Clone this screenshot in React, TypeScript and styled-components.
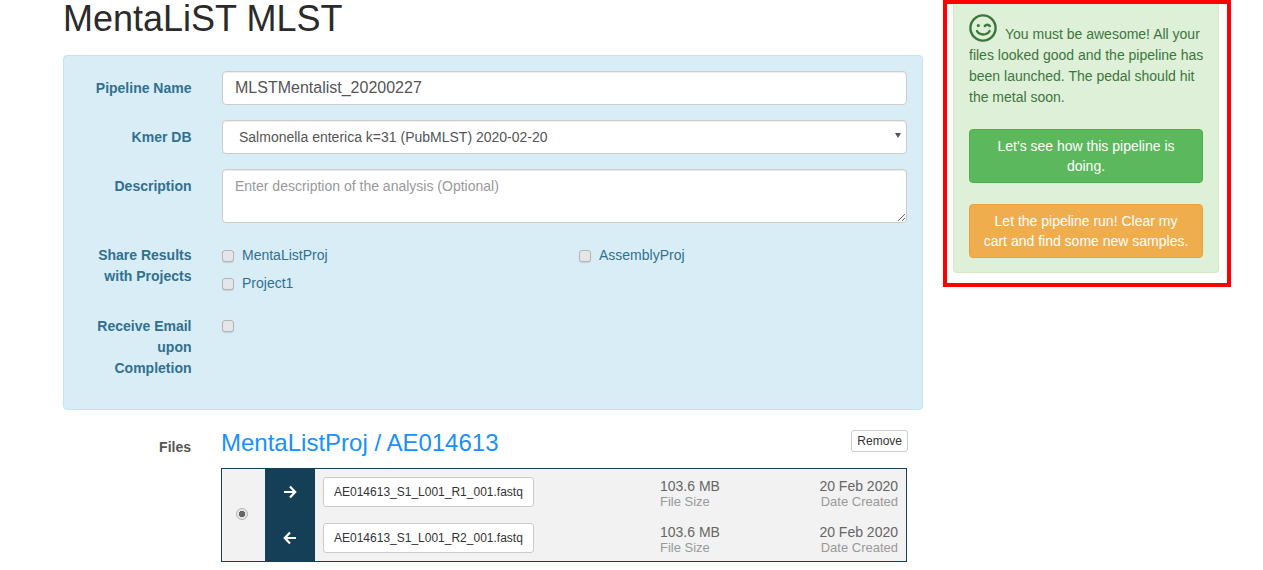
import styled, { createGlobalStyle } from "styled-components";

const GlobalStyle = createGlobalStyle`
  html, body {
    margin: 0;
    padding: 0;
    background: #fff;
    height: 570px;
    overflow: hidden;
  }
  * { box-sizing: border-box; }
  body {
    font-family: "Liberation Sans", Arial, sans-serif;
    font-size: 14px;
    line-height: 1.43;
    color: #333;
  }
`;

const Page = styled.div`
  display: flex;
  align-items: flex-start;
  height: 570px;
  overflow: hidden;
  padding-left: 63px;
`;

const Main = styled.div`
  width: 860px;
  flex: none;
`;

const Title = styled.h1`
  margin: 0 0 17px;
  font-size: 36px;
  font-weight: 500;
  line-height: 38px;
  color: #2b2b2b;
`;

const FormPanel = styled.div`
  background: #d9edf7;
  border: 1px solid #bce8f1;
  border-radius: 4px;
  padding: 15px 15px 26px;
  height: 355px;
`;

const Row = styled.div<{ $bottom?: number }>`
  display: grid;
  grid-template-columns: 112.5px 1fr;
  column-gap: 30.5px;
  margin-bottom: ${(p) => p.$bottom ?? 15}px;
`;

const FieldLabel = styled.label`
  font-weight: 700;
  color: #31708f;
  text-align: right;
  padding-top: 7px;
  line-height: 21px;
`;

const TextInput = styled.input`
  width: 100%;
  height: 34px;
  padding: 6px 12px;
  font: 16px "Liberation Sans", Arial, sans-serif;
  color: #555;
  background: #fff;
  border: 1px solid #ccc;
  border-radius: 4px;
  box-shadow: inset 0 1px 1px rgba(0, 0, 0, 0.075);
`;

const SelectBox = styled.div`
  position: relative;
  height: 34px;
  padding: 6px 16px;
  font-size: 14px;
  line-height: 20px;
  color: #555;
  background: #fff;
  border: 1px solid #ccc;
  border-radius: 4px;
  box-shadow: inset 0 1px 1px rgba(0, 0, 0, 0.075);
`;

const Caret = styled.span`
  position: absolute;
  right: 5px;
  top: 12px;
  width: 0;
  height: 0;
  border-left: 3px solid transparent;
  border-right: 3px solid transparent;
  border-top: 5px solid #555;
`;

const TextArea = styled.textarea`
  display: block;
  width: 100%;
  height: 54px;
  padding: 6px 12px;
  font: 14px/20px "Liberation Sans", Arial, sans-serif;
  color: #555;
  background: #fff;
  border: 1px solid #ccc;
  border-radius: 4px;
  box-shadow: inset 0 1px 1px rgba(0, 0, 0, 0.075);
  &::placeholder { color: #999; opacity: 1; }
`;

const CheckGrid = styled.div`
  display: grid;
  grid-template-columns: 357px 1fr;
  row-gap: 7px;
  padding-top: 7px;
`;

const CheckLabel = styled.label`
  display: flex;
  align-items: center;
  gap: 8px;
  line-height: 21px;
  color: #31708f;
`;

const CheckBox = styled.input.attrs({ type: "checkbox" })`
  appearance: none;
  width: 12px;
  height: 12px;
  margin: 0;
  background: #e4e6e8;
  border: 1px solid #b5b5b5;
  border-radius: 3px;
  box-shadow: 0 1px 1px rgba(0, 0, 0, 0.12);
`;

const EmailCheck = styled.div`
  padding-top: 7px;
  height: 84px;
  display: flex;
  align-items: flex-start;
  & > input { margin-top: 4px; }
`;

const FilesSection = styled.div`
  display: grid;
  grid-template-columns: 128px 686px;
  column-gap: 30px;
  padding-top: 19px;
`;

const FilesLabel = styled.div`
  font-weight: 700;
  color: #555;
  text-align: right;
  padding-top: 8px;
`;

const FilesHeader = styled.div`
  display: flex;
  justify-content: space-between;
  align-items: flex-start;
  height: 39px;
`;

const ProjectLink = styled.a`
  font-size: 24px;
  line-height: 28px;
  color: #1890ff;
`;

const RemoveButton = styled.button`
  font: 12px/16px "Liberation Sans", Arial, sans-serif;
  color: #333;
  background: #fff;
  border: 1px solid #ccc;
  border-radius: 3px;
  padding: 2px 5px;
  height: 22px;
  margin: 1px -1px 0 0;
`;

const FileTable = styled.div`
  display: grid;
  grid-template-columns: 43px 50px 1fr;
  height: 94px;
  background: #f2f2f2;
  border: 1px solid #153e57;
`;

const RadioCell = styled.div`
  display: flex;
  align-items: center;
  justify-content: center;
  padding: 0 3px 3px 0;
`;

const Radio = styled.input.attrs({ type: "radio", defaultChecked: true })`
  appearance: none;
  width: 12px;
  height: 12px;
  margin: 0;
  border: 1px solid #b5b5b5;
  border-radius: 50%;
  background: radial-gradient(circle, #666 0 3px, #e4e6e8 3.5px);
`;

const ArrowColumn = styled.div`
  display: grid;
  grid-template-rows: 1fr 1fr;
  background: #153e57;
  color: #fff;
  align-items: center;
  justify-items: center;
`;

const FileRows = styled.div`
  display: grid;
  grid-template-rows: 46px 46px;
`;

const FileRow = styled.div`
  display: flex;
  align-items: center;
  padding: 0 8px;
`;

const FileName = styled.div`
  width: 211px;
  height: 30px;
  font-size: 12px;
  line-height: 28px;
  padding-left: 10px;
  color: #333;
  background: #fff;
  border: 1px solid #ccc;
  border-radius: 3px;
`;

const Meta = styled.div<{ $width: number; $right?: boolean }>`
  width: ${(p) => p.$width}px;
  margin-left: ${(p) => (p.$right ? 0 : 126)}px;
  padding-top: 5px;
  text-align: ${(p) => (p.$right ? "right" : "left")};
  font-size: 14px;
  line-height: 15px;
  color: #666;
  & > small {
    display: block;
    font-size: 13px;
    line-height: 16px;
    color: #999;
  }
`;

const Side = styled.div`
  flex: none;
  width: 288px;
  height: 287px;
  margin-left: 20px;
  border: 4px solid #f00;
  padding: 0 8px 0 6px;
`;

const Success = styled.div`
  height: 269px;
  background: #dff0d8;
  border: 1px solid #d6e9c6;
  border-top: 0;
  border-radius: 0 0 4px 4px;
  padding: 10px 15px 0;
  color: #3c763d;
  line-height: 21px;
`;

const Message = styled.p`
  margin: 0 -3px 21px 0;
  & > svg {
    vertical-align: -3px;
    margin-right: 8px;
  }
`;

const ActionButton = styled.a<{ $color: string; $border: string }>`
  display: block;
  padding: 6px 12px;
  margin-bottom: 21px;
  text-align: center;
  line-height: 20px;
  color: #fff;
  background: ${(p) => p.$color};
  border: 1px solid ${(p) => p.$border};
  border-radius: 4px;
`;

const WinkIcon = () => (
  <svg width="28" height="28" viewBox="0 0 28 28" fill="none" stroke="#3c763d" strokeWidth="2.4" strokeLinecap="round">
    <circle cx="14" cy="14" r="12.6" />
    <circle cx="9.3" cy="11.5" r="1.6" fill="#3c763d" stroke="none" />
    <path d="M15.8 12c1.2-1.7 3.8-1.7 5 0" />
    <path d="M8 17c2.2 4.6 10.2 4.6 12.6 0" />
  </svg>
);

const ArrowIcon = ({ flip }: { flip?: boolean }) => (
  <svg width="14" height="14" viewBox="0 0 14 14" fill="none" stroke="#fff" strokeWidth="2.2" style={flip ? { transform: "scaleX(-1)" } : undefined}>
    <path d="M1 7h11M7 1.5l5.2 5.5-5.2 5.5" />
  </svg>
);

const files = [
  { name: "AE014613_S1_L001_R1_001.fastq" },
  { name: "AE014613_S1_L001_R2_001.fastq" },
];

export default function App() {
  return (
    <Page>
      <GlobalStyle />
      <Main>
        <Title>MentaLiST MLST</Title>
        <FormPanel>
          <Row>
            <FieldLabel>Pipeline Name</FieldLabel>
            <TextInput defaultValue="MLSTMentalist_20200227" />
          </Row>
          <Row>
            <FieldLabel>Kmer DB</FieldLabel>
            <SelectBox>
              Salmonella enterica k=31 (PubMLST) 2020-02-20
              <Caret />
            </SelectBox>
          </Row>
          <Row>
            <FieldLabel>Description</FieldLabel>
            <TextArea placeholder="Enter description of the analysis (Optional)" />
          </Row>
          <Row>
            <FieldLabel>Share Results with Projects</FieldLabel>
            <CheckGrid>
              <CheckLabel><CheckBox />MentaListProj</CheckLabel>
              <CheckLabel><CheckBox />AssemblyProj</CheckLabel>
              <CheckLabel><CheckBox />Project1</CheckLabel>
            </CheckGrid>
          </Row>
          <Row $bottom={0}>
            <FieldLabel>Receive Email upon Completion</FieldLabel>
            <EmailCheck><CheckBox /></EmailCheck>
          </Row>
        </FormPanel>
        <FilesSection>
          <FilesLabel>Files</FilesLabel>
          <div>
            <FilesHeader>
              <ProjectLink>MentaListProj / AE014613</ProjectLink>
              <RemoveButton>Remove</RemoveButton>
            </FilesHeader>
            <FileTable>
              <RadioCell><Radio /></RadioCell>
              <ArrowColumn>
                <ArrowIcon />
                <ArrowIcon flip />
              </ArrowColumn>
              <FileRows>
                {files.map((f) => (
                  <FileRow key={f.name}>
                    <FileName>{f.name}</FileName>
                    <Meta $width={90}>103.6 MB<small>File Size</small></Meta>
                    <Meta $width={148} $right>20 Feb 2020<small>Date Created</small></Meta>
                  </FileRow>
                ))}
              </FileRows>
            </FileTable>
          </div>
        </FilesSection>
      </Main>
      <Side>
        <Success>
          <Message>
            <WinkIcon />
            You must be awesome! All your files looked good and the pipeline has been launched. The pedal should hit the metal soon.
          </Message>
          <ActionButton $color="#5cb85c" $border="#4cae4c">Let's see how this pipeline is doing.</ActionButton>
          <ActionButton $color="#f0ad4e" $border="#eea236">Let the pipeline run! Clear my cart and find some new samples.</ActionButton>
        </Success>
      </Side>
    </Page>
  );
}
